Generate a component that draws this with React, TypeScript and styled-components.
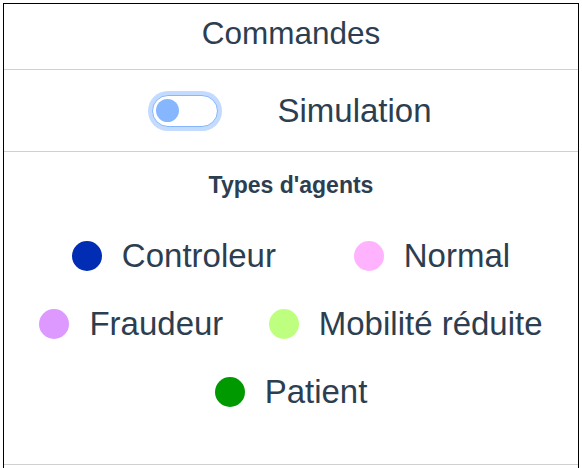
import React from "react";
import styled, { createGlobalStyle } from "styled-components";

const Global = createGlobalStyle`
  html, body { margin: 0; padding: 0; background: #fff; }
  body { font-family: "Liberation Sans", Arial, Helvetica, sans-serif; color: #2c3e50; }
`;

const Panel = styled.div`
  margin: 3px 0 0 3px;
  width: 574px;
  border: 1px solid #000;
  border-bottom: none;
  height: 480px;
  box-sizing: content-box;
  display: flex;
  flex-direction: column;
`;

const Header = styled.div`
  height: 66px;
  box-sizing: border-box;
  padding-bottom: 7px;
  display: flex;
  align-items: center;
  justify-content: center;
  font-size: 31.5px;
  border-bottom: 1px solid #d0d0d0;
`;

const ToggleRow = styled.div`
  height: 82px;
  display: flex;
  align-items: center;
  justify-content: center;
  gap: 59px;
  font-size: 33px;
  border-bottom: 1px solid #d0d0d0;
  padding-left: 2px;
  box-sizing: border-box;
`;

const Switch = styled.div`
  width: 66px;
  height: 32px;
  box-sizing: border-box;
  border: 1px solid #86b7fe;
  border-radius: 16px;
  box-shadow: 0 0 0 4px rgba(13, 110, 253, 0.25);
  background: #fff;
  display: flex;
  align-items: center;
  padding-left: 3px;
`;

const Knob = styled.div`
  width: 23px;
  height: 23px;
  border-radius: 50%;
  background: #86b7fe;
`;

const Label = styled.span`
  line-height: 1;
`;

const Legend = styled.div`
  height: 312px;
  border-bottom: 1px solid #d0d0d0;
  display: flex;
  flex-direction: column;
  align-items: stretch;
`;

const Title = styled.div`
  font-weight: bold;
  font-size: 23px;
  line-height: 26px;
  text-align: center;
  margin-top: 20px;
  margin-bottom: 24px;
`;

const Items = styled.div`
  display: flex;
  flex-wrap: wrap;
  justify-content: space-evenly;
`;

const Item = styled.div`
  display: flex;
  align-items: center;
  gap: 20px;
  margin: 14px 10px;
  font-size: 33px;
  line-height: 40px;
`;

const Dot = styled.span<{ $color: string }>`
  width: 30px;
  height: 30px;
  border-radius: 50%;
  background: ${(p) => p.$color};
  flex: none;
`;

const agents = [
  { name: "Controleur", color: "#002db3" },
  { name: "Normal", color: "#ffb3ff" },
  { name: "Fraudeur", color: "#dd99ff" },
  { name: "Mobilité réduite", color: "#bfff80" },
  { name: "Patient", color: "#009900" },
];

export default function App() {
  return (
    <>
      <Global />
      <Panel>
        <Header>Commandes</Header>
        <ToggleRow>
          <Switch>
            <Knob />
          </Switch>
          <Label>Simulation</Label>
        </ToggleRow>
        <Legend>
          <Title>Types d'agents</Title>
          <Items>
            {agents.map((a) => (
              <Item key={a.name}>
                <Dot $color={a.color} />
                <span>{a.name}</span>
              </Item>
            ))}
          </Items>
        </Legend>
      </Panel>
    </>
  );
}
